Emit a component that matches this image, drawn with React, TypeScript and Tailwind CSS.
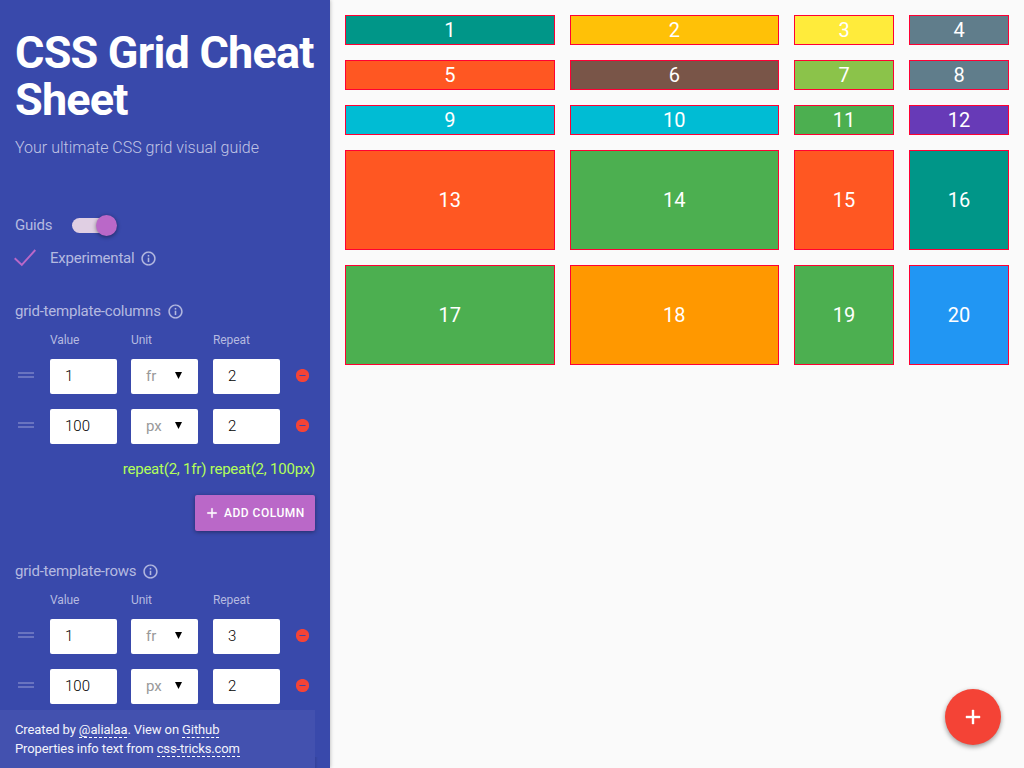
import React from "react";

const InfoIcon = () => (
  <svg className="size-[17px] shrink-0 fill-current stroke-current [stroke-width:0.2]" viewBox="0 0 24 24">
    <path d="M11 17h2v-6h-2v6zm1-15C6.48 2 2 6.48 2 12s4.48 10 10 10 10-4.48 10-10S17.52 2 12 2zm0 18c-4.41 0-8-3.59-8-8s3.59-8 8-8 8 3.59 8 8-3.59 8-8 8zM11 9h2V7h-2v2z" />
  </svg>
);

const PlusIcon = ({ className }: { className: string }) => (
  <svg className={className} viewBox="0 0 24 24" fill="currentColor">
    <path d="M19 13h-6v6h-2v-6H5v-2h6V5h2v6h6v2z" />
  </svg>
);

type Track = { value: string; unit: string; repeat: string };

const TrackRow = ({ value, unit, repeat }: Track) => (
  <div className="mb-[15px] flex h-[35px] items-center text-[15px]">
    <svg className="mr-3 mb-[3px] ml-[-1px] size-6 fill-[#6974c0]" viewBox="0 0 24 24">
      <path d="M4 9h16v2H4zM4 13h16v2H4z" />
    </svg>
    <div className="flex h-[35px] w-[67px] items-center rounded-[2px] bg-white pl-[15px] font-light text-black">{value}</div>
    <div className="ml-[14px] flex h-[35px] w-[67px] items-center justify-between rounded-[2px] bg-white pr-[16px] pl-[15px] text-[#999]">
      {unit}
      <svg className="mb-[2px] h-[7px] w-[7px] fill-black" viewBox="0 0 7 7">
        <path d="M0 0h7L3.5 7z" />
      </svg>
    </div>
    <div className="ml-[15px] flex h-[35px] w-[67px] items-center rounded-[2px] bg-white pl-[15px] font-light text-black">{repeat}</div>
    <svg className="mb-[2px] ml-[16px] size-[13px]" viewBox="0 0 13 13">
      <circle cx="6.5" cy="6.5" r="6.6" fill="#f44336" />
      <path d="M3.5 6h6v1h-6z" fill="#3949ab" />
    </svg>
  </div>
);

const TrackSection = ({ title, tracks, children }: { title: string; tracks: Track[]; children?: React.ReactNode }) => (
  <section>
    <h2 className="flex h-5 items-center gap-[6px] text-[15px] leading-5 tracking-[-0.23px]">
      {title}
      <InfoIcon />
    </h2>
    <div className="mt-[10px] mb-[10px] flex h-[18px] items-center pl-[35px] text-[12px] tracking-[-0.1px]">
      <span className="w-[81px]">Value</span>
      <span className="w-[82px]">Unit</span>
      <span>Repeat</span>
    </div>
    {tracks.map((t) => (
      <TrackRow key={t.value} {...t} />
    ))}
    {children}
  </section>
);

const cells = [
  "bg-[#009688]", "bg-[#ffc107]", "bg-[#ffeb3b]", "bg-[#607d8b]",
  "bg-[#ff5722]", "bg-[#795548]", "bg-[#8bc34a]", "bg-[#607d8b]",
  "bg-[#00bcd4]", "bg-[#00bcd4]", "bg-[#4caf50]", "bg-[#673ab7]",
  "bg-[#ff5722]", "bg-[#4caf50]", "bg-[#ff5722]", "bg-[#009688]",
  "bg-[#4caf50]", "bg-[#ff9800]", "bg-[#4caf50]", "bg-[#2196f3]",
];

export default function App() {
  return (
    <div className="relative flex h-screen w-screen overflow-hidden bg-[#fafafa] font-['Roboto',sans-serif]">
      <aside className="relative h-full w-[330px] shrink-0 overflow-hidden bg-[#3949ab] px-[15px] pt-[29px] text-[#b5bae0] shadow-[0_0_4px_rgba(0,0,0,0.3)]">
        <h1 className="text-[45px] leading-[47px] font-bold tracking-[-0.8px] whitespace-nowrap text-white">
          CSS Grid Cheat
          <br />
          Sheet
        </h1>
        <p className="mt-[13px] text-[16px] leading-6 font-light text-[#c0c4e5]">Your ultimate CSS grid visual guide</p>

        <div className="mt-[53px] flex h-6 items-center text-[15px] tracking-[-0.23px]">
          <span className="w-[57px]">Guids</span>
          <div className="flex h-[15px] w-[43px] items-center justify-end rounded-full bg-[#e0cfe3]">
            <div className="mr-[-2px] size-[21px] shrink-0 rounded-full bg-[#ba68c8] shadow-[0_1px_4px_rgba(0,0,0,0.45)]" />
          </div>
        </div>
        <div className="mt-[9px] flex h-6 items-center text-[15px] tracking-[-0.23px]">
          <svg className="mr-[13px] ml-[-1px] h-[18px] w-[23px]" viewBox="0 0 23 18" fill="none" stroke="#ba68c8" strokeWidth="1.9">
            <path d="M0.7 9.3L7.8 16L21.3 1" />
          </svg>
          <span className="mr-[6px]">Experimental</span>
          <InfoIcon />
        </div>

        <div className="mt-[31px]">
          <TrackSection
            title="grid-template-columns"
            tracks={[
              { value: "1", unit: "fr", repeat: "2" },
              { value: "100", unit: "px", repeat: "2" },
            ]}
          >
            <div className="text-right text-[15px] leading-5 tracking-[-0.22px] text-[#b2ff59]">repeat(2, 1fr) repeat(2, 100px)</div>
            <div className="mt-4 flex justify-end">
              <button className="flex h-9 w-[120px] items-center rounded-[2px] bg-[#ba68c8] pl-[9px] text-[12px] font-medium tracking-[0.5px] whitespace-nowrap text-white shadow-[0_1px_4px_rgba(0,0,0,0.4)]">
                <PlusIcon className="mr-[4px] size-4 stroke-current [stroke-width:0.4]" />
                ADD COLUMN
              </button>
            </div>
          </TrackSection>
        </div>
        <div className="mt-[30px]">
          <TrackSection
            title="grid-template-rows"
            tracks={[
              { value: "1", unit: "fr", repeat: "3" },
              { value: "100", unit: "px", repeat: "2" },
            ]}
          />
        </div>

        <footer className="absolute bottom-0 left-0 h-[58px] w-[315px] bg-[#4351af] pt-[10px] pl-[15px] text-[13px] leading-[19px] tracking-[-0.11px] text-[#f3f4fb]">
          <div>
            Created by <a className="inline-block border-b border-dashed border-white leading-[15px]">@alialaa</a>. View on{" "}
            <a className="inline-block border-b border-dashed border-white leading-[15px]">Github</a>
          </div>
          <div>
            Properties info text from{" "}
            <a className="inline-block border-b border-dashed border-white leading-[15px]">css-tricks.com</a>
          </div>
        </footer>
        <div className="absolute right-[12px] bottom-0 h-[11px] w-[3px] bg-linear-to-r from-black/10 to-transparent" />
      </aside>

      <main className="grid h-[365px] flex-1 grid-cols-[1fr_1fr_100px_100px] grid-rows-[repeat(3,30px)_repeat(2,100px)] gap-[15px] p-[15px]">
        {cells.map((color, i) => (
          <div key={i} className={`flex items-center justify-center border border-[#ff0033] text-[20px] text-white ${color}`}>
            {i + 1}
          </div>
        ))}
      </main>

      <button className="absolute right-[23px] bottom-[23px] flex size-14 items-center justify-center rounded-full bg-[#f44336] text-white shadow-[0_2px_5px_rgba(0,0,0,0.4)]">
        <PlusIcon className="size-6 stroke-current [stroke-width:0.4]" />
      </button>
    </div>
  );
}
